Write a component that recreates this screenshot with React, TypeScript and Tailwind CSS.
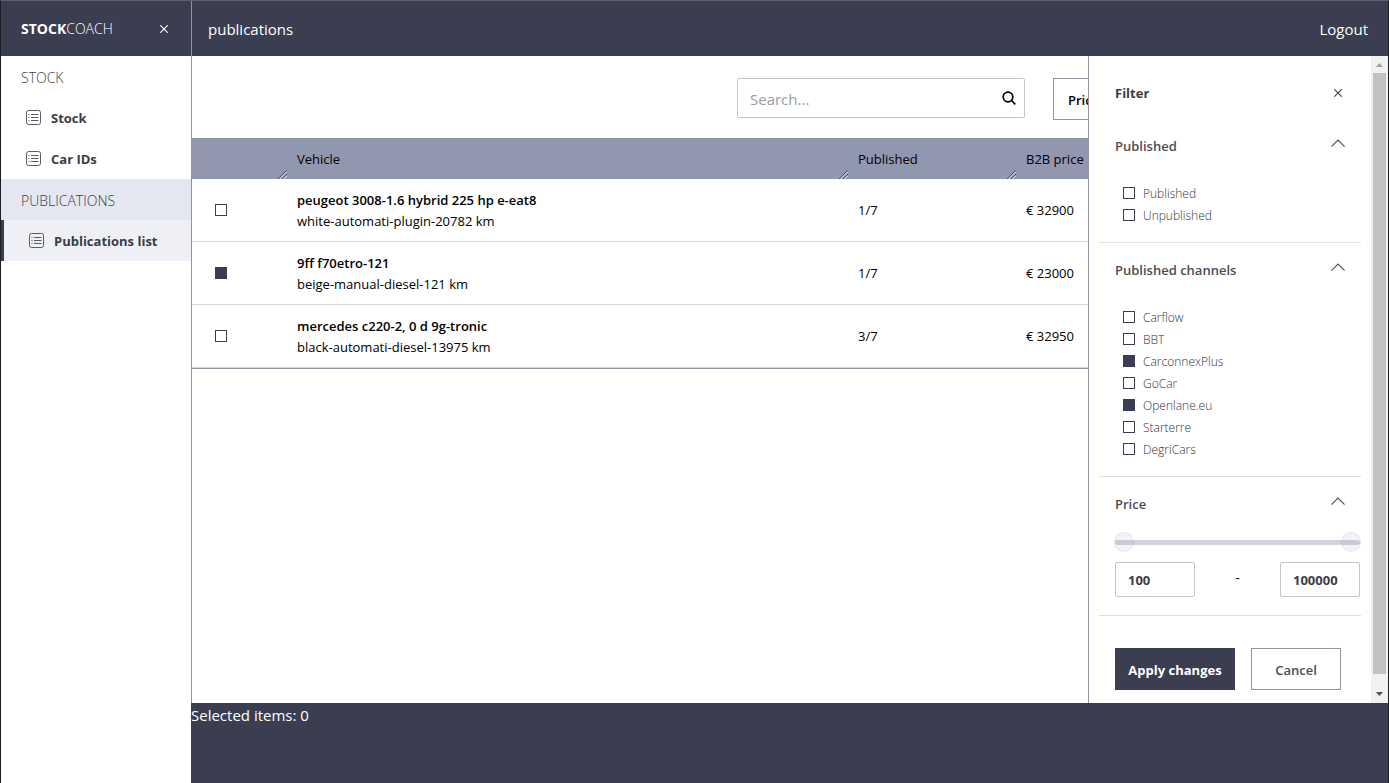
import { useState, type ReactNode } from "react";

type Row = { name: string; details: string; published: string; price: string; checked: boolean };

const rows: Row[] = [
  { name: "peugeot 3008-1.6 hybrid 225 hp e-eat8", details: "white-automati-plugin-20782 km", published: "1/7", price: "€ 32900", checked: false },
  { name: "9ff f70etro-121", details: "beige-manual-diesel-121 km", published: "1/7", price: "€ 23000", checked: true },
  { name: "mercedes c220-2, 0 d 9g-tronic", details: "black-automati-diesel-13975 km", published: "3/7", price: "€ 32950", checked: false },
];

const channels = [
  { label: "Carflow", checked: false },
  { label: "BBT", checked: false },
  { label: "CarconnexPlus", checked: true },
  { label: "GoCar", checked: false },
  { label: "Openlane.eu", checked: true },
  { label: "Starterre", checked: false },
  { label: "DegriCars", checked: false },
];

const box = "block size-3 shrink-0 appearance-none border border-[#3a3e50] bg-white checked:bg-[#3a3e50]";

function ListIcon() {
  return (
    <svg className="size-[15px] shrink-0" viewBox="0 0 15 15" fill="none" stroke="#5b5e68" aria-hidden="true">
      <rect x="0.5" y="0.5" width="14" height="14" rx="2" />
      <path d="M2.500 4.500h1M5 4.500h7.500M2.500 7.500h1M5 7.500h7.500M2.500 10.500h1M5 10.500h7.500" />
    </svg>
  );
}

function CloseIcon() {
  return (
    <svg className="size-2" viewBox="0 0 8 8" fill="none" stroke="currentColor" strokeWidth="1.1" aria-hidden="true">
      <path d="M0.3 0.3l7.4 7.4M7.7 0.3L0.3 7.7" />
    </svg>
  );
}

function ResizeGrip() {
  return (
    <svg className="absolute right-0 bottom-0 size-[9px]" viewBox="0 0 9 9" fill="none" aria-hidden="true">
      <path d="M1.500 9L9 1.500M5.500 9L9 5.500" stroke="#e4e5ee" />
      <path d="M0 9L8.500 .5M4 9l5-5" stroke="#3f4357" strokeWidth="0.9" />
    </svg>
  );
}

function NavHeading({ label, highlighted = false }: { label: string; highlighted?: boolean }) {
  return (
    <h2
      className={
        highlighted
          ? "flex h-[41px] items-center bg-[#e4e6f0] pt-0.5 pl-5 text-sm font-light text-[#3a3d47]"
          : "flex h-[41px] items-center pt-0.5 pl-5 text-sm font-light text-[#3a3d47]"
      }
    >
      {label}
    </h2>
  );
}

function NavItem({ label, active = false }: { label: string; active?: boolean }) {
  return (
    <a
      href="#"
      className={
        active
          ? "flex h-[41px] items-center gap-2.5 border-l-3 border-[#3a3e50] bg-[#eff0f6] pl-[25px] text-[13px] font-bold text-[#3a3d47]"
          : "flex h-[41px] items-center gap-2.5 pl-[25px] text-[13px] font-bold text-[#3a3d47]"
      }
    >
      <ListIcon />
      <span className="pt-0.5">{label}</span>
    </a>
  );
}

function Section({ title, children }: { title: string; children: ReactNode }) {
  return (
    <section className="border-b border-[#dfe0e4]">
      <button type="button" className="flex h-[54px] w-full items-center justify-between px-4 text-[13px] font-semibold text-[#4a4d55]">
        <span className="pt-0.5">{title}</span>
        <svg className="mb-1.5 h-2 w-3.5" viewBox="0 0 14 8" fill="none" stroke="#4a4d55" strokeWidth="1.1" aria-hidden="true">
          <path d="M0.400 7.600L7 1l6.600 6.600" />
        </svg>
      </button>
      {children}
    </section>
  );
}

function CheckList({ items }: { items: { label: string; checked: boolean }[] }) {
  return (
    <div className="px-6 pt-[9px] pb-4">
      {items.map((item) => (
        <label key={item.label} className="flex h-[22px] items-center gap-2 text-xs font-light text-[#30333c]">
          <input type="checkbox" defaultChecked={item.checked} className={box} />
          <span className="pt-0.5">{item.label}</span>
        </label>
      ))}
    </div>
  );
}

const range =
  "pointer-events-none col-start-1 row-start-1 h-5 w-full appearance-none bg-transparent [&::-webkit-slider-thumb]:pointer-events-auto [&::-webkit-slider-thumb]:size-5 [&::-webkit-slider-thumb]:appearance-none [&::-webkit-slider-thumb]:rounded-full [&::-webkit-slider-thumb]:border [&::-webkit-slider-thumb]:border-[#8088a020] [&::-webkit-slider-thumb]:bg-[#8c96b41c]";

function PriceFilter() {
  const [low, setLow] = useState(100);
  const [high, setHigh] = useState(100000);
  const field = "h-[35px] w-20 rounded-xs border border-[#c3c5ca] px-3 text-[13px] font-bold text-[#3a3d47]";
  return (
    <div className="pr-px pb-[18px] pl-4">
      <div className="-mx-px grid h-[22px] items-center">
        <div className="col-start-1 row-start-1 mx-px h-[5px] rounded-full bg-[#d0d3db]" />
        <input type="range" aria-label="Lowest price" min={100} max={100000} value={low} onChange={(e) => setLow(+e.target.value)} className={range} />
        <input type="range" aria-label="Highest price" min={100} max={100000} value={high} onChange={(e) => setHigh(+e.target.value)} className={range} />
      </div>
      <div className="mt-[9px] flex items-center justify-between">
        <input type="text" aria-label="From price" value={low} onChange={(e) => setLow(+e.target.value || 0)} className={field} />
        <span className="pb-1 text-sm">-</span>
        <input type="text" aria-label="To price" value={high} onChange={(e) => setHigh(+e.target.value || 0)} className={field} />
      </div>
    </div>
  );
}

function FilterPanel() {
  return (
    <aside className="absolute inset-y-0 right-0 flex w-[300px] border-l border-[#8f95a0] bg-white">
      <div className="min-w-0 flex-1 px-2.5">
        <div className="flex h-[63px] items-center justify-between px-4 pt-3">
          <h2 className="text-[13px] font-bold text-[#3a3d47]">Filter</h2>
          <button type="button" aria-label="Close filter" className="px-[3px] pb-0.5 text-[#3a3d47]">
            <CloseIcon />
          </button>
        </div>
        <Section title="Published">
          <CheckList items={[{ label: "Published", checked: false }, { label: "Unpublished", checked: false }]} />
        </Section>
        <Section title="Published channels">
          <CheckList items={channels} />
        </Section>
        <Section title="Price">
          <PriceFilter />
        </Section>
        <div className="flex gap-4 px-4 pt-8 text-[13px]">
          <button type="button" className="h-[42px] w-[120px] bg-[#3a3e50] pt-1 font-bold whitespace-nowrap text-white">Apply changes</button>
          <button type="button" className="h-[42px] w-[90px] border border-[#8f95a0] pt-1 font-semibold text-[#4a4d55]">Cancel</button>
        </div>
      </div>
      <div className="flex w-[17px] flex-col items-center bg-[#f1f1f1]" aria-hidden="true">
        <svg className="h-[17px] w-[17px] shrink-0" viewBox="0 0 17 17"><path d="M5 11h7L8.500 7z" fill="#a3a3a3" /></svg>
        <div className="w-[13px] flex-1 bg-[#c1c1c1]" />
        <svg className="mt-3 h-[17px] w-[17px] shrink-0" viewBox="0 0 17 17"><path d="M5 6h7L8.500 10z" fill="#505050" /></svg>
      </div>
    </aside>
  );
}

export default function App() {
  const head = "relative px-2.5 pt-0.5 pb-0 font-normal";
  const cell = "border-b border-[#d5d7db] px-2.5 pt-0.5 pb-0";
  return (
    <div className="flex h-screen border-x border-t border-x-[#1c1d22] border-t-[#5c606a] bg-white font-['Open_Sans','Noto_Sans',sans-serif] text-black">
      <nav className="flex w-[191px] shrink-0 flex-col border-r border-[#8f95a0]">
        <div className="flex h-[55px] items-center justify-between bg-[#3a3e50] pr-[23px] pl-5 text-white">
          <span className="text-sm font-light"><b className="font-bold">STOCK</b>COACH</span>
          <button type="button" aria-label="Close menu"><CloseIcon /></button>
        </div>
        <NavHeading label="STOCK" />
        <NavItem label="Stock" />
        <NavItem label="Car IDs" />
        <NavHeading label="PUBLICATIONS" highlighted />
        <NavItem label="Publications list" active />
      </nav>
      <div className="flex min-w-0 flex-1 flex-col">
        <header className="flex h-[55px] shrink-0 items-center justify-between bg-[#3a3e50] pt-0.5 pr-5 pl-4 text-[15px] text-white">
          <h1>publications</h1>
          <a href="#">Logout</a>
        </header>
        <main className="relative min-h-0 flex-1 overflow-hidden">
          <div className="flex h-[82px] items-start justify-end gap-7 pt-[22px] pr-[239px]">
            <label className="flex h-10 w-72 items-center rounded-xs border border-[#c3c5ca] px-2">
              <input type="search" aria-label="Search" placeholder="Search..." className="min-w-0 flex-1 px-1 pt-0.5 text-[15px] outline-none placeholder:text-[#9a9da5]" />
              <svg className="size-3.5" viewBox="0 0 14 14" fill="none" stroke="black" strokeWidth="1.700" aria-hidden="true">
                <circle cx="6" cy="6" r="4.800" />
                <path d="M9.500 9.500L13.300 13.300" />
              </svg>
            </label>
            <button type="button" className="h-[42px] w-24 border border-[#8f95a0] px-3.5 pt-1 text-left text-[13px] font-semibold">Price</button>
          </div>
          <table className="w-full table-fixed border-separate border-spacing-0 border-b border-[#8f95a0] text-left text-[13px]">
            <colgroup>
              <col className="w-[95px]" />
              <col className="w-[561px]" />
              <col className="w-[168px]" />
              <col />
            </colgroup>
            <thead>
              <tr className="h-[41px] bg-[#9297b0]">
                <th className={head}><ResizeGrip /></th>
                <th className={head}>Vehicle<ResizeGrip /></th>
                <th className={head}>Published<ResizeGrip /></th>
                <th className={head}>B2B price</th>
              </tr>
            </thead>
            <tbody>
              {rows.map((row) => (
                <tr key={row.name} className="h-[63px]">
                  <td className="border-b border-[#d5d7db] py-0 pl-[23px]">
                    <input type="checkbox" aria-label={row.name} defaultChecked={row.checked} className={box} />
                  </td>
                  <td className={cell}>
                    <div className="leading-[21px] font-semibold">{row.name}</div>
                    <div className="leading-[21px]">{row.details}</div>
                  </td>
                  <td className={cell}>{row.published}</td>
                  <td className={cell}>{row.price}</td>
                </tr>
              ))}
            </tbody>
          </table>
          <FilterPanel />
        </main>
        <footer className="-ml-px h-20 shrink-0 bg-[#3a3e50] pt-px text-[15px] text-white">Selected items: 0</footer>
      </div>
    </div>
  );
}
